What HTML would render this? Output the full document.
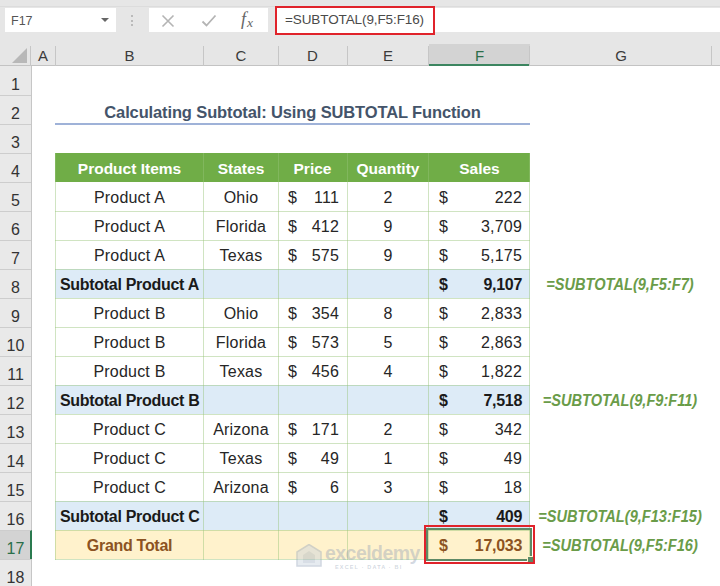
<!DOCTYPE html><html><head><meta charset="utf-8"><title>Calculating Subtotal</title><style>
html,body{margin:0;padding:0}
body{width:720px;height:586px;overflow:hidden;background:#fff;position:relative;font-family:"Liberation Sans", sans-serif;color:#262626}
div,span{position:absolute;box-sizing:border-box;white-space:nowrap}
.t{line-height:31px;height:29px;font-size:16px;letter-spacing:.2px;text-align:center}
.b{font-weight:bold;letter-spacing:-.3px}
.hd{color:#fff;font-weight:bold;font-size:15.5px;letter-spacing:0}
.ch{top:44px;height:22px;line-height:23.5px;font-size:15px;text-align:center;color:#3b3b3b}
.rh{left:0;width:31px;height:29px;line-height:35px;font-size:16px;text-align:center;color:#333;border-top:1px solid #cdcdcd}
.f{color:#6a9c49;font-weight:bold;font-style:italic;font-size:16px;line-height:31.5px;height:29px;text-align:center;transform:scaleX(.912)}
.vl{width:1px;background:rgba(150,195,120,.45)}
.hl{height:1px;background:rgba(150,195,120,.45)}

</style></head><body>
<div style="left:0;top:0;width:720px;height:66px;background:#e6e6e6"></div>
<div style="left:0;top:6px;width:720px;height:1px;background:#dcdcdc"></div>
<div style="left:5px;top:8px;width:111px;height:24px;background:#fff"></div>
<div style="left:11px;top:8px;height:24px;line-height:27px;font-size:12.5px;color:#555">F17</div>
<div style="left:100.5px;top:18px;width:0;height:0;border-left:4px solid transparent;border-right:4px solid transparent;border-top:4px solid #666"></div>
<div style="left:131px;top:15px;width:2px;height:2px;background:#bababa"></div>
<div style="left:131px;top:19.5px;width:2px;height:2px;background:#bababa"></div>
<div style="left:131px;top:24px;width:2px;height:2px;background:#bababa"></div>
<div style="left:149px;top:8px;width:119px;height:24px;background:#fff"></div>
<svg style="position:absolute;left:161px;top:13.5px" width="14" height="14" viewBox="0 0 14 14"><path d="M1.5 1.5 L12.5 12.5 M12.5 1.5 L1.5 12.5" stroke="#b4b4b4" stroke-width="1.6" fill="none"/></svg>
<svg style="position:absolute;left:201px;top:14px" width="16" height="14" viewBox="0 0 16 14"><path d="M1.5 7.5 L5.5 11.5 L14.5 1.5" stroke="#b4b4b4" stroke-width="1.8" fill="none"/></svg>
<div style="left:241px;top:8px;height:24px;line-height:22px;font-family:'Liberation Serif',serif;font-style:italic;font-size:18px;color:#666">f<span style="position:relative;font-size:13.5px;top:2px;left:1px">x</span></div>
<div style="left:275px;top:8px;width:445px;height:24px;background:#fff"></div>
<div style="left:275px;top:5.5px;width:159.5px;height:29.5px;border:2.5px solid #e0232b;background:#fff"></div>
<div style="left:285px;top:6px;height:29px;line-height:28px;font-size:13.5px;letter-spacing:-.1px;color:#4a4a4a">=SUBTOTAL(9,F5:F16)</div>
<div style="left:0;top:66px;width:720px;height:520px;background:#fff"></div>
<div style="left:0;top:65px;width:720px;height:1px;background:#c3c3c3"></div>
<div class="ch" style="left:31px;width:24px;color:#3b3b3b">A</div>
<div style="left:55px;top:46px;width:1px;height:20px;background:#c6c6c6"></div>
<div class="ch" style="left:55px;width:149px;color:#3b3b3b">B</div>
<div style="left:203px;top:46px;width:1px;height:20px;background:#c6c6c6"></div>
<div class="ch" style="left:204px;width:74px;color:#3b3b3b">C</div>
<div style="left:278px;top:46px;width:1px;height:20px;background:#c6c6c6"></div>
<div class="ch" style="left:278px;width:69px;color:#3b3b3b">D</div>
<div style="left:347px;top:46px;width:1px;height:20px;background:#c6c6c6"></div>
<div class="ch" style="left:347px;width:82px;color:#3b3b3b">E</div>
<div style="left:428px;top:46px;width:1px;height:20px;background:#c6c6c6"></div>
<div style="left:429px;top:44px;width:101px;height:22px;background:#d3d3d3;border-bottom:2px solid #3c8560"></div>
<div class="ch" style="left:429px;width:101px;color:#2a6e49">F</div>
<div style="left:529px;top:46px;width:1px;height:20px;background:#c6c6c6"></div>
<div class="ch" style="left:530px;width:182px;color:#3b3b3b">G</div>
<div style="left:711px;top:46px;width:1px;height:20px;background:#c6c6c6"></div>
<div style="left:30px;top:46px;width:1px;height:20px;background:#c6c6c6"></div>
<svg style="position:absolute;left:12px;top:48px" width="16" height="16" viewBox="0 0 16 16"><path d="M15 0 L15 15 L0 15 Z" fill="#b8b8b8"/></svg>
<div style="left:0;top:66px;width:32px;height:520px;background:#e9e9e9;border-right:1px solid #c6c6c6"></div>
<div class="rh" style="top:66px;border-top-color:transparent">1</div>
<div class="rh" style="top:95px">2</div>
<div class="rh" style="top:124px">3</div>
<div class="rh" style="top:153px">4</div>
<div class="rh" style="top:182px">5</div>
<div class="rh" style="top:211px">6</div>
<div class="rh" style="top:240px">7</div>
<div class="rh" style="top:269px">8</div>
<div class="rh" style="top:298px">9</div>
<div class="rh" style="top:327px">10</div>
<div class="rh" style="top:356px">11</div>
<div class="rh" style="top:385px">12</div>
<div class="rh" style="top:414px">13</div>
<div class="rh" style="top:443px">14</div>
<div class="rh" style="top:472px">15</div>
<div class="rh" style="top:501px">16</div>
<div class="rh" style="top:530px;background:#d3d3d3;border-right:2px solid #2a7a4f;color:#2a6e49;width:32px;padding-left:1px">17</div>
<div class="rh" style="top:559px">18</div>
<div class="t b" style="left:55px;width:475px;top:95px;font-size:16.5px;letter-spacing:-.13px;color:#44546a;line-height:35px">Calculating Subtotal: Using SUBTOTAL Function</div>
<div style="left:55px;width:475px;top:123px;height:2px;background:#9fb2d8"></div>
<div style="left:55px;top:153px;width:475px;height:29px;background:#70ad47"></div>
<div style="left:55px;top:269px;width:475px;height:29px;background:#ddebf7"></div>
<div style="left:55px;top:385px;width:475px;height:29px;background:#ddebf7"></div>
<div style="left:55px;top:501px;width:475px;height:29px;background:#ddebf7"></div>
<div style="left:55px;top:530px;width:475px;height:29px;background:#fff2cc"></div>
<div class="hl" style="left:55px;top:211px;width:475px"></div>
<div class="hl" style="left:55px;top:240px;width:475px"></div>
<div class="hl" style="left:55px;top:269px;width:475px"></div>
<div class="hl" style="left:55px;top:298px;width:475px"></div>
<div class="hl" style="left:55px;top:327px;width:475px"></div>
<div class="hl" style="left:55px;top:356px;width:475px"></div>
<div class="hl" style="left:55px;top:385px;width:475px"></div>
<div class="hl" style="left:55px;top:414px;width:475px"></div>
<div class="hl" style="left:55px;top:443px;width:475px"></div>
<div class="hl" style="left:55px;top:472px;width:475px"></div>
<div class="hl" style="left:55px;top:501px;width:475px"></div>
<div class="hl" style="left:55px;top:530px;width:475px"></div>
<div class="hl" style="left:55px;top:559px;width:475px"></div>
<div class="vl" style="left:55px;top:153px;height:407px"></div>
<div class="vl" style="left:203px;top:153px;height:407px"></div>
<div class="vl" style="left:278px;top:153px;height:407px"></div>
<div class="vl" style="left:347px;top:153px;height:407px"></div>
<div class="vl" style="left:428px;top:153px;height:407px"></div>
<div class="vl" style="left:529px;top:153px;height:407px"></div>
<div class="t hd" style="left:55px;width:149px;top:153px">Product Items</div>
<div class="t hd" style="left:204px;width:74px;top:153px">States</div>
<div class="t hd" style="left:278px;width:69px;top:153px">Price</div>
<div class="t hd" style="left:347px;width:82px;top:153px">Quantity</div>
<div class="t hd" style="left:429px;width:101px;top:153px">Sales</div>
<div class="t" style="left:55px;width:149px;top:182px">Product A</div>
<div class="t" style="left:204px;width:74px;top:182px">Ohio</div>
<div class="t" style="left:347px;width:82px;top:182px">2</div>
<div class="t " style="left:288px;top:182px;text-align:left">$</div>
<div class="t " style="right:381px;top:182px;text-align:right">111</div>
<div class="t " style="left:439px;top:182px;text-align:left">$</div>
<div class="t " style="right:198px;top:182px;text-align:right">222</div>
<div class="t" style="left:55px;width:149px;top:211px">Product A</div>
<div class="t" style="left:204px;width:74px;top:211px">Florida</div>
<div class="t" style="left:347px;width:82px;top:211px">9</div>
<div class="t " style="left:288px;top:211px;text-align:left">$</div>
<div class="t " style="right:381px;top:211px;text-align:right">412</div>
<div class="t " style="left:439px;top:211px;text-align:left">$</div>
<div class="t " style="right:198px;top:211px;text-align:right">3,709</div>
<div class="t" style="left:55px;width:149px;top:240px">Product A</div>
<div class="t" style="left:204px;width:74px;top:240px">Texas</div>
<div class="t" style="left:347px;width:82px;top:240px">9</div>
<div class="t " style="left:288px;top:240px;text-align:left">$</div>
<div class="t " style="right:381px;top:240px;text-align:right">575</div>
<div class="t " style="left:439px;top:240px;text-align:left">$</div>
<div class="t " style="right:198px;top:240px;text-align:right">5,175</div>
<div class="t" style="left:55px;width:149px;top:298px">Product B</div>
<div class="t" style="left:204px;width:74px;top:298px">Ohio</div>
<div class="t" style="left:347px;width:82px;top:298px">8</div>
<div class="t " style="left:288px;top:298px;text-align:left">$</div>
<div class="t " style="right:381px;top:298px;text-align:right">354</div>
<div class="t " style="left:439px;top:298px;text-align:left">$</div>
<div class="t " style="right:198px;top:298px;text-align:right">2,833</div>
<div class="t" style="left:55px;width:149px;top:327px">Product B</div>
<div class="t" style="left:204px;width:74px;top:327px">Florida</div>
<div class="t" style="left:347px;width:82px;top:327px">5</div>
<div class="t " style="left:288px;top:327px;text-align:left">$</div>
<div class="t " style="right:381px;top:327px;text-align:right">573</div>
<div class="t " style="left:439px;top:327px;text-align:left">$</div>
<div class="t " style="right:198px;top:327px;text-align:right">2,863</div>
<div class="t" style="left:55px;width:149px;top:356px">Product B</div>
<div class="t" style="left:204px;width:74px;top:356px">Texas</div>
<div class="t" style="left:347px;width:82px;top:356px">4</div>
<div class="t " style="left:288px;top:356px;text-align:left">$</div>
<div class="t " style="right:381px;top:356px;text-align:right">456</div>
<div class="t " style="left:439px;top:356px;text-align:left">$</div>
<div class="t " style="right:198px;top:356px;text-align:right">1,822</div>
<div class="t" style="left:55px;width:149px;top:414px">Product C</div>
<div class="t" style="left:204px;width:74px;top:414px">Arizona</div>
<div class="t" style="left:347px;width:82px;top:414px">2</div>
<div class="t " style="left:288px;top:414px;text-align:left">$</div>
<div class="t " style="right:381px;top:414px;text-align:right">171</div>
<div class="t " style="left:439px;top:414px;text-align:left">$</div>
<div class="t " style="right:198px;top:414px;text-align:right">342</div>
<div class="t" style="left:55px;width:149px;top:443px">Product C</div>
<div class="t" style="left:204px;width:74px;top:443px">Texas</div>
<div class="t" style="left:347px;width:82px;top:443px">1</div>
<div class="t " style="left:288px;top:443px;text-align:left">$</div>
<div class="t " style="right:381px;top:443px;text-align:right">49</div>
<div class="t " style="left:439px;top:443px;text-align:left">$</div>
<div class="t " style="right:198px;top:443px;text-align:right">49</div>
<div class="t" style="left:55px;width:149px;top:472px">Product C</div>
<div class="t" style="left:204px;width:74px;top:472px">Arizona</div>
<div class="t" style="left:347px;width:82px;top:472px">3</div>
<div class="t " style="left:288px;top:472px;text-align:left">$</div>
<div class="t " style="right:381px;top:472px;text-align:right">6</div>
<div class="t " style="left:439px;top:472px;text-align:left">$</div>
<div class="t " style="right:198px;top:472px;text-align:right">18</div>
<div class="t b" style="left:60px;top:269px;text-align:left;color:#1a1a1a">Subtotal Product A</div>
<div class="t b" style="left:439px;top:269px;text-align:left;color:#1a1a1a">$</div>
<div class="t b" style="right:198px;top:269px;text-align:right;color:#1a1a1a">9,107</div>
<div class="f" style="left:528.5px;width:182px;top:269px">=SUBTOTAL(9,F5:F7)</div>
<div class="t b" style="left:60px;top:385px;text-align:left;color:#1a1a1a">Subtotal Product B</div>
<div class="t b" style="left:439px;top:385px;text-align:left;color:#1a1a1a">$</div>
<div class="t b" style="right:198px;top:385px;text-align:right;color:#1a1a1a">7,518</div>
<div class="f" style="left:528.5px;width:182px;top:385px">=SUBTOTAL(9,F9:F11)</div>
<div class="t b" style="left:60px;top:501px;text-align:left;color:#1a1a1a">Subtotal Product C</div>
<div class="t b" style="left:439px;top:501px;text-align:left;color:#1a1a1a">$</div>
<div class="t b" style="right:198px;top:501px;text-align:right;color:#1a1a1a">409</div>
<div class="f" style="left:528.5px;width:182px;top:501px">=SUBTOTAL(9,F13:F15)</div>
<div class="t b" style="left:55px;width:149px;top:530px;color:#8c5322">Grand Total</div>
<div class="t b" style="left:439px;top:530px;text-align:left;color:#8c5322">$</div>
<div class="t b" style="right:198px;top:530px;text-align:right;color:#8c5322">17,033</div>
<div class="f" style="left:528.5px;width:182px;top:530px">=SUBTOTAL(9,F5:F16)</div>
<div style="left:426px;top:528px;width:106px;height:33px;border:2px solid #5e8a66"></div>
<div style="left:527px;top:556px;width:6px;height:6px;background:#5e8a66;border-left:1px solid #fff2cc;border-top:1px solid #fff2cc"></div>
<div style="left:424px;top:525px;width:111px;height:39px;border:2.5px solid #e0232b"></div>
<svg style="position:absolute;left:296px;top:544px;opacity:.45" width="26" height="23" viewBox="0 0 26 23"><path d="M13 0.5 L25 8 L25 22 L1 22 L1 8 Z" fill="#c9d3e0" stroke="#9aa9bf" stroke-width="1.5"/><path d="M13 7 L19 11 L19 19 L7 19 L7 11 Z" fill="#aab7ca"/></svg>
<div style="left:325px;top:541px;font-size:19.5px;font-weight:bold;color:rgba(150,163,183,.42);line-height:24px;letter-spacing:-.55px">exceldemy</div>
<div style="left:335px;top:563px;font-size:5.5px;font-weight:bold;color:rgba(150,163,183,.42);line-height:8px;letter-spacing:1.15px">EXCEL · DATA · BI</div>
</body></html>
